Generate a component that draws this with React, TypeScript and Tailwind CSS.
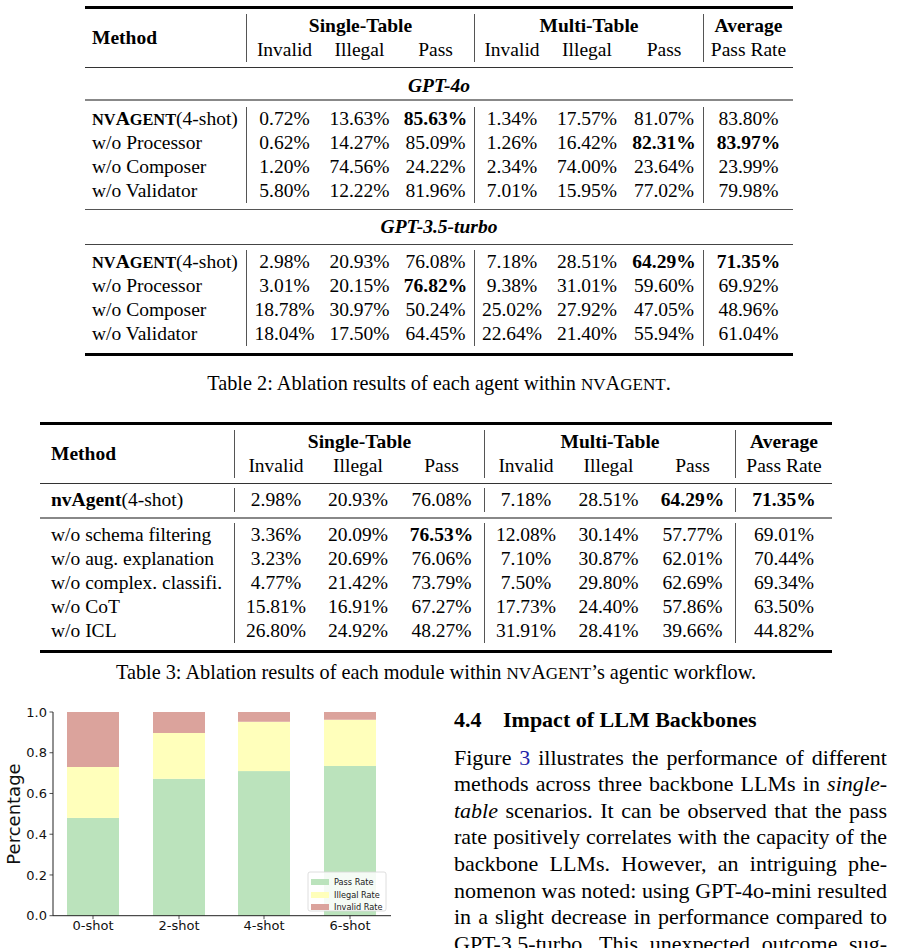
import type { ReactNode } from "react";

const serif = "font-['Liberation_Serif','Times_New_Roman',serif]";

const t2 = {
  cols: "grid-cols-[161px_76px_75px_77px_75px_76px_78px_90px]",
  pad: "pl-[7px]",
};
const t3 = {
  cols: "grid-cols-[194px_83px_82px_85px_83px_83px_85px_97px]",
  pad: "pl-[11px]",
};

// small caps the way the paper's font draws them (wider than the browser's fake ones)
const NvAgent = ({ bold = false }: { bold?: boolean }) => (
  <span className={bold ? "font-bold" : ""}>
    <span className="text-[0.84em] leading-none">NV</span>A
    <span className="text-[0.84em] leading-none">GENT</span>
  </span>
);

function Header({ cols, pad }: { cols: string; pad: string }) {
  const line = "border-l border-[#555]";
  return (
    <div className={`grid ${cols} py-[5px] leading-[24px]`}>
      <div className={`row-span-2 flex items-center font-bold ${pad}`}>Method</div>
      <div className={`col-span-3 text-center font-bold ${line}`}>Single-Table</div>
      <div className={`col-span-3 text-center font-bold ${line}`}>Multi-Table</div>
      <div className={`text-center font-bold ${line}`}>Average</div>
      <div className={`text-center ${line}`}>Invalid</div>
      <div className="text-center">Illegal</div>
      <div className="text-center">Pass</div>
      <div className={`text-center ${line}`}>Invalid</div>
      <div className="text-center">Illegal</div>
      <div className="text-center">Pass</div>
      <div className={`text-center ${line}`}>Pass Rate</div>
    </div>
  );
}

function Row({ cols, pad, label, vals }: { cols: string; pad: string; label: ReactNode; vals: string[] }) {
  return (
    <div className={`grid ${cols} h-[24px] leading-[24px]`}>
      <div className={`whitespace-nowrap ${pad}`}>{label}</div>
      {vals.map((v, i) => (
        <div
          key={i}
          className={`text-center whitespace-nowrap ${i === 0 || i === 3 || i === 6 ? "border-l border-[#555]" : ""} ${
            v.startsWith("*") ? "font-bold" : ""
          }`}
        >
          {v.replace("*", "")}
        </div>
      ))}
    </div>
  );
}

const gpt4o: [ReactNode, string[]][] = [
  [<><NvAgent bold />(4-shot)</>, ["0.72%", "13.63%", "*85.63%", "1.34%", "17.57%", "81.07%", "83.80%"]],
  ["w/o Processor", ["0.62%", "14.27%", "85.09%", "1.26%", "16.42%", "*82.31%", "*83.97%"]],
  ["w/o Composer", ["1.20%", "74.56%", "24.22%", "2.34%", "74.00%", "23.64%", "23.99%"]],
  ["w/o Validator", ["5.80%", "12.22%", "81.96%", "7.01%", "15.95%", "77.02%", "79.98%"]],
];

const gpt35: [ReactNode, string[]][] = [
  [<><NvAgent bold />(4-shot)</>, ["2.98%", "20.93%", "76.08%", "7.18%", "28.51%", "*64.29%", "*71.35%"]],
  ["w/o Processor", ["3.01%", "20.15%", "*76.82%", "9.38%", "31.01%", "59.60%", "69.92%"]],
  ["w/o Composer", ["18.78%", "30.97%", "50.24%", "25.02%", "27.92%", "47.05%", "48.96%"]],
  ["w/o Validator", ["18.04%", "17.50%", "64.45%", "22.64%", "21.40%", "55.94%", "61.04%"]],
];

const modules: [string, string[]][] = [
  ["w/o schema filtering", ["3.36%", "20.09%", "*76.53%", "12.08%", "30.14%", "57.77%", "69.01%"]],
  ["w/o aug. explanation", ["3.23%", "20.69%", "76.06%", "7.10%", "30.87%", "62.01%", "70.44%"]],
  ["w/o complex. classifi.", ["4.77%", "21.42%", "73.79%", "7.50%", "29.80%", "62.69%", "69.34%"]],
  ["w/o CoT", ["15.81%", "16.91%", "67.27%", "17.73%", "24.40%", "57.86%", "63.50%"]],
  ["w/o ICL", ["26.80%", "24.92%", "48.27%", "31.91%", "28.41%", "39.66%", "44.82%"]],
];

// chart geometry (svg coords, top of svg = page y 700)
const Y0 = 215.7;
const H = 203.7;
const yv = (v: number) => Y0 - v * H;
const bars = [
  { x: 67, pass: 0.48, illegal: 0.73, label: "0-shot" },
  { x: 153, pass: 0.672, illegal: 0.897, label: "2-shot" },
  { x: 238, pass: 0.71, illegal: 0.952, label: "4-shot" },
  { x: 324, pass: 0.735, illegal: 0.962, label: "6-shot" },
];
const GREEN = "#bbe3bc";
const YELLOW = "#ffffbb";
const RED = "#dba39c";

function Chart() {
  const font = "'DejaVu Sans', sans-serif";
  return (
    <svg width={430} height={248} className="block">
      {bars.map((b) => (
        <g key={b.label}>
          <rect x={b.x} y={yv(b.pass)} width={52} height={Y0 - yv(b.pass)} fill={GREEN} />
          <rect x={b.x} y={yv(b.illegal)} width={52} height={yv(b.pass) - yv(b.illegal)} fill={YELLOW} />
          <rect x={b.x} y={yv(1)} width={52} height={yv(b.illegal) - yv(1)} fill={RED} />
          <line x1={b.x + 26} x2={b.x + 26} y1={Y0} y2={Y0 + 3.5} stroke="#222" strokeWidth={0.8} />
          <text x={b.x + 26} y={230} textAnchor="middle" fontSize={13} fontFamily={font} fill="#111">
            {b.label}
          </text>
        </g>
      ))}
      {[0, 0.2, 0.4, 0.6, 0.8, 1.0].map((v) => (
        <g key={v}>
          <line x1={49.5} x2={53} y1={yv(v)} y2={yv(v)} stroke="#222" strokeWidth={0.8} />
          <text x={47} y={yv(v) + 4.7} textAnchor="end" fontSize={13} fontFamily={font} fill="#111">
            {v.toFixed(1)}
          </text>
        </g>
      ))}
      <line x1={53} x2={53} y1={yv(1)} y2={Y0} stroke="#222" strokeWidth={1} />
      <line x1={53} x2={391} y1={Y0} y2={Y0} stroke="#222" strokeWidth={1} />
      <text
        x={0}
        y={0}
        transform="translate(20 114) rotate(-90)"
        textAnchor="middle"
        fontSize={18}
        fontFamily={font}
        fill="#111"
      >
        Percentage
      </text>
      <rect x={308} y={172} width={78} height={39} rx={2} fill="#fff" fillOpacity={0.85} stroke="#d6d6d6" strokeWidth={0.8} />
      {[
        { c: GREEN, t: "Pass Rate", y: 179 },
        { c: YELLOW, t: "Illegal Rate", y: 192 },
        { c: RED, t: "Invalid Rate", y: 204 },
      ].map((l) => (
        <g key={l.t}>
          <rect x={311} y={l.y} width={18} height={6} fill={l.c} />
          <text x={334} y={l.y + 5.5} fontSize={8.2} fontFamily={font} fill="#222">
            {l.t}
          </text>
        </g>
      ))}
    </svg>
  );
}

const bodyLines: ReactNode[] = [
  <>Figure <span className="text-[#2323a8]">3</span> illustrates the performance of different</>,
  <>methods across three backbone LLMs in <i>single-</i></>,
  <><i>table</i> scenarios. It can be observed that the pass</>,
  <>rate positively correlates with the capacity of the</>,
  <>backbone LLMs. However, an intriguing phe-</>,
  <>nomenon was noted: using GPT-4o-mini resulted</>,
  <>in a slight decrease in performance compared to</>,
  <>GPT-3.5-turbo. This unexpected outcome sug-</>,
];

export default function App() {
  return (
    <div className={`w-[897px] h-[948px] overflow-hidden bg-white text-black ${serif}`}>
      {/* Table 2 */}
      <div className="ml-[85px] w-[708px] pt-[6px] text-[19.5px]">
        <div className="h-[3px] bg-black" />
        <Header cols={t2.cols} pad={t2.pad} />
        <div className="h-px bg-[#333]" />
        <div className="text-center font-bold italic leading-[24px] pt-[6px] pb-px">GPT-4o</div>
        <div className="h-[2px] bg-[#888]" />
        <div className="py-[6px]">
          {gpt4o.map(([l, v], i) => (
            <Row key={i} cols={t2.cols} pad={t2.pad} label={l} vals={v} />
          ))}
        </div>
        <div className="h-px bg-[#555]" />
        <div className="text-center font-bold italic leading-[24px] py-[5px]">GPT-3.5-turbo</div>
        <div className="h-px bg-[#444]" />
        <div className="pt-[5px] pb-[7px]">
          {gpt35.map(([l, v], i) => (
            <Row key={i} cols={t2.cols} pad={t2.pad} label={l} vals={v} />
          ))}
        </div>
        <div className="h-[3px] bg-black" />
        <div className="mt-[15px] h-[24px] text-center text-[20.3px] leading-[24px]">
          Table 2: Ablation results of each agent within <NvAgent />.
        </div>
      </div>

      {/* Table 3 */}
      <div className="ml-[40px] w-[792px] mt-[27px] text-[19.5px]">
        <div className="h-[3px] bg-black" />
        <Header cols={t3.cols} pad={t3.pad} />
        <div className="h-px bg-[#333]" />
        <div className="pt-[4px] pb-[5px]">
          <Row
            cols={t3.cols}
            pad={t3.pad}
            label={<><b>nvAgent</b>(4-shot)</>}
            vals={["2.98%", "20.93%", "76.08%", "7.18%", "28.51%", "*64.29%", "*71.35%"]}
          />
        </div>
        <div className="h-[2px] bg-[#888]" />
        <div className="pt-[4px] pb-[7px]">
          {modules.map(([l, v], i) => (
            <Row key={i} cols={t3.cols} pad={t3.pad} label={l} vals={v} />
          ))}
        </div>
        <div className="h-[3px] bg-black" />
        <div className="mt-[7px] h-[24px] text-center text-[20.3px] leading-[24px]">
          Table 3: Ablation results of each module within <NvAgent />’s agentic workflow.
        </div>
      </div>

      {/* Figure + section text */}
      <div className="mt-[16px] flex">
        <div className="w-[430px] shrink-0">
          <Chart />
        </div>
        <div className="ml-[24px] w-[433px] pt-[8px]">
          <div className="flex text-[22px] leading-[24px] font-bold">
            <span className="w-[49px]">4.4</span>
            <span>Impact of LLM Backbones</span>
          </div>
          <div className="mt-[12.7px] text-[22px] leading-[26.6px]">
            {bodyLines.map((l, i) => (
              <div key={i} className="whitespace-nowrap text-justify [text-align-last:justify]">
                {l}
              </div>
            ))}
          </div>
        </div>
      </div>
    </div>
  );
}
